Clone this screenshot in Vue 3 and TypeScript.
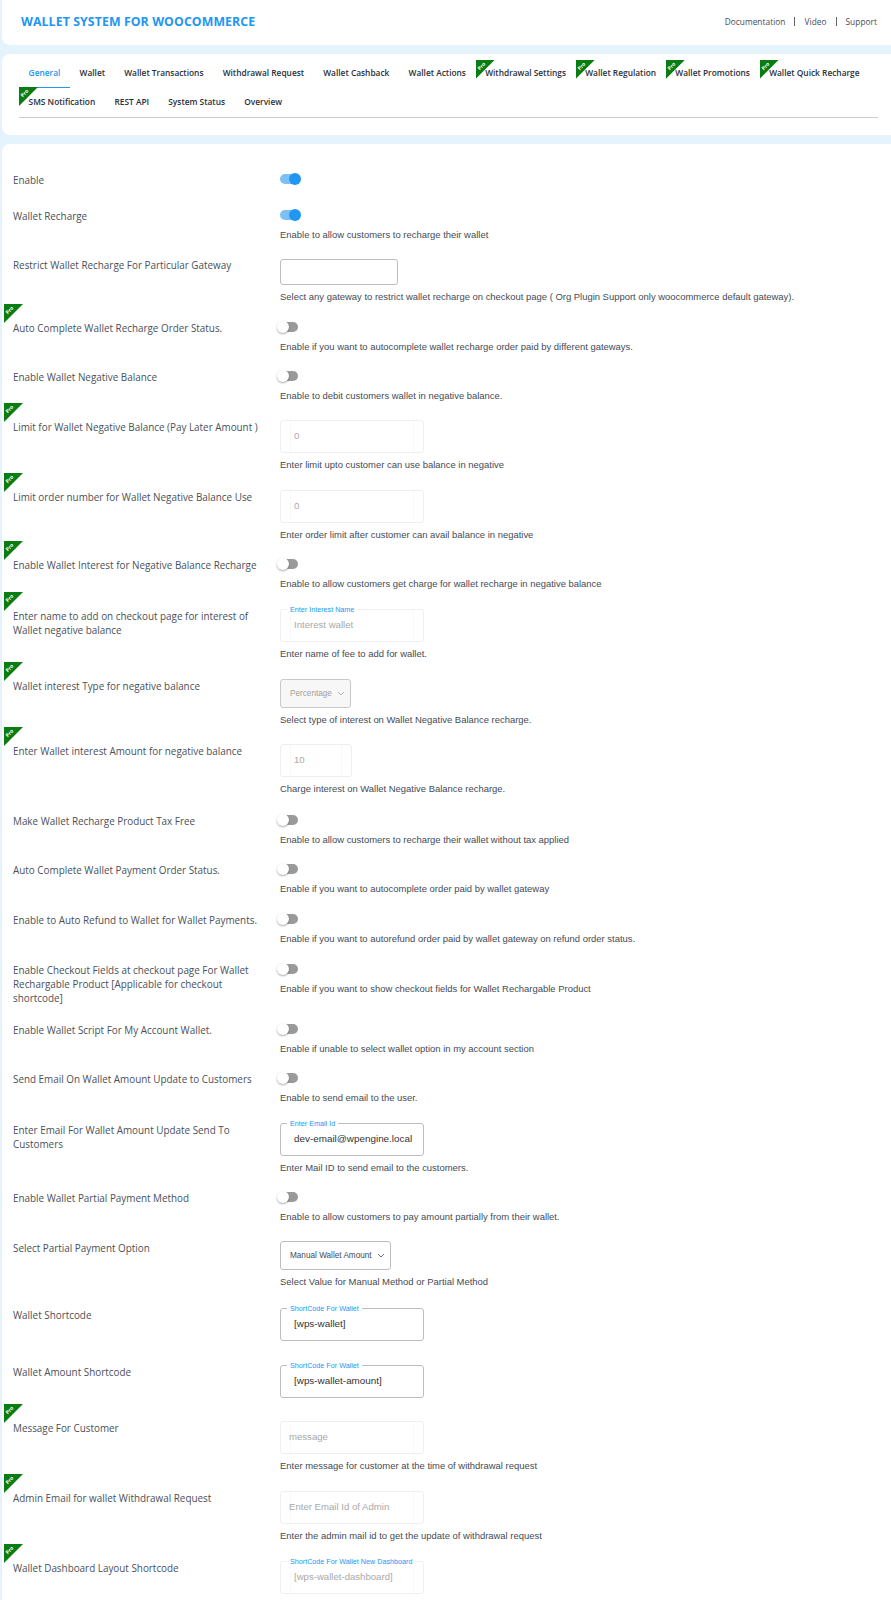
<template>
  <div class="page">
    <header class="card top-bar">
      <h1>WALLET SYSTEM FOR WOOCOMMERCE</h1>
      <nav class="top-links">
        <a>Documentation</a><i></i><a>Video</a><i></i><a>Support</a>
      </nav>
    </header>

    <nav class="card tabs-card">
      <div class="tabs">
        <a
          v-for="tab in tabs"
          :key="tab.name"
          class="tab"
          :class="{ active: tab.name === 'General' }"
        >
          <span v-if="tab.pro" class="pro tab-pro"><b>Pro</b></span>
          {{ tab.name }}
        </a>
      </div>
    </nav>

    <section class="card settings">
      <div
        v-for="row in rows"
        :key="row.label"
        class="row"
        :style="{ height: row.h + 'px' }"
      >
        <div class="label">
          <span v-if="row.pro" class="pro row-pro"><b>Pro</b></span>
          {{ row.label }}
        </div>
        <div class="control">
          <div v-if="row.kind === 'toggle'" class="toggle" :class="{ on: row.on }"></div>

          <div v-else-if="row.kind === 'select'" class="select" :class="{ off: row.off }" :style="{ width: row.w + 'px' }">
            <span>{{ row.value }}</span>
            <svg width="8" height="5" viewBox="0 0 8 5"><path d="M1 1l3 3 3-3" fill="none" stroke="currentColor" stroke-width="0.8" /></svg>
          </div>

          <div
            v-else
            class="field"
            :class="{ off: row.off, flush: row.flush, short: row.kind === 'plain' }"
            :style="{ width: (row.w || 144) + 'px' }"
          >
            <span v-if="row.legend" class="legend">{{ row.legend }}</span>
            <span class="value">{{ row.value }}</span>
          </div>

          <p v-if="row.desc" class="desc" :class="{ 'after-toggle': row.kind === 'toggle' }">{{ row.desc }}</p>
        </div>
      </div>
    </section>
  </div>
</template>

<script setup lang="ts">
type Tab = { name: string; pro?: boolean }

type Row = {
  label: string
  h: number
  kind: 'toggle' | 'input' | 'select' | 'plain'
  desc?: string
  pro?: boolean
  on?: boolean
  off?: boolean
  flush?: boolean
  value?: string
  legend?: string
  w?: number
}

const tabs: Tab[] = [
  { name: 'General' },
  { name: 'Wallet' },
  { name: 'Wallet Transactions' },
  { name: 'Withdrawal Request' },
  { name: 'Wallet Cashback' },
  { name: 'Wallet Actions' },
  { name: 'Withdrawal Settings', pro: true },
  { name: 'Wallet Regulation', pro: true },
  { name: 'Wallet Promotions', pro: true },
  { name: 'Wallet Quick Recharge', pro: true },
  { name: 'SMS Notification', pro: true },
  { name: 'REST API' },
  { name: 'System Status' },
  { name: 'Overview' },
]

const rows: Row[] = [
  { label: 'Enable', h: 36, kind: 'toggle', on: true },
  { label: 'Wallet Recharge', h: 49, kind: 'toggle', on: true, desc: 'Enable to allow customers to recharge their wallet' },
  { label: 'Restrict Wallet Recharge For Particular Gateway', h: 63, kind: 'plain', w: 118, desc: 'Select any gateway to restrict wallet recharge on checkout page ( Org Plugin Support only woocommerce default gateway).' },
  { label: 'Auto Complete Wallet Recharge Order Status.', h: 49, kind: 'toggle', pro: true, desc: 'Enable if you want to autocomplete wallet recharge order paid by different gateways.' },
  { label: 'Enable Wallet Negative Balance', h: 50, kind: 'toggle', desc: 'Enable to debit customers wallet in negative balance.' },
  { label: 'Limit for Wallet Negative Balance (Pay Later Amount )', h: 70, kind: 'input', pro: true, off: true, value: '0', desc: 'Enter limit upto customer can use balance in negative' },
  { label: 'Limit order number for Wallet Negative Balance Use', h: 68, kind: 'input', pro: true, off: true, value: '0', desc: 'Enter order limit after customer can avail balance in negative' },
  { label: 'Enable Wallet Interest for Negative Balance Recharge', h: 51, kind: 'toggle', pro: true, desc: 'Enable to allow customers get charge for wallet recharge in negative balance' },
  { label: 'Enter name to add on checkout page for interest of Wallet negative balance', h: 70, kind: 'input', pro: true, off: true, legend: 'Enter Interest Name', value: 'Interest wallet', desc: 'Enter name of fee to add for wallet.' },
  { label: 'Wallet interest Type for negative balance', h: 65, kind: 'select', pro: true, off: true, w: 71, value: 'Percentage', desc: 'Select type of interest on Wallet Negative Balance recharge.' },
  { label: 'Enter Wallet interest Amount for negative balance', h: 70, kind: 'input', pro: true, off: true, w: 72, value: '10', desc: 'Charge interest on Wallet Negative Balance recharge.' },
  { label: 'Make Wallet Recharge Product Tax Free', h: 49, kind: 'toggle', desc: 'Enable to allow customers to recharge their wallet without tax applied' },
  { label: 'Auto Complete Wallet Payment Order Status.', h: 50, kind: 'toggle', desc: 'Enable if you want to autocomplete order paid by wallet gateway' },
  { label: 'Enable to Auto Refund to Wallet for Wallet Payments.', h: 50, kind: 'toggle', desc: 'Enable if you want to autorefund order paid by wallet gateway on refund order status.' },
  { label: 'Enable Checkout Fields at checkout page For Wallet Rechargable Product [Applicable for checkout shortcode]', h: 60, kind: 'toggle', desc: 'Enable if you want to show checkout fields for Wallet Rechargable Product' },
  { label: 'Enable Wallet Script For My Account Wallet.', h: 49, kind: 'toggle', desc: 'Enable if unable to select wallet option in my account section' },
  { label: 'Send Email On Wallet Amount Update to Customers', h: 51, kind: 'toggle', desc: 'Enable to send email to the user.' },
  { label: 'Enter Email For Wallet Amount Update Send To Customers', h: 68, kind: 'input', legend: 'Enter Email Id', value: 'dev-email@wpengine.local', desc: 'Enter Mail ID to send email to the customers.' },
  { label: 'Enable Wallet Partial Payment Method', h: 50, kind: 'toggle', desc: 'Enable to allow customers to pay amount partially from their wallet.' },
  { label: 'Select Partial Payment Option', h: 67, kind: 'select', w: 111, value: 'Manual Wallet Amount', desc: 'Select Value for Manual Method or Partial Method' },
  { label: 'Wallet Shortcode', h: 57, kind: 'input', legend: 'ShortCode For Wallet', value: '[wps-wallet]' },
  { label: 'Wallet Amount Shortcode', h: 56, kind: 'input', legend: 'ShortCode For Wallet', value: '[wps-wallet-amount]' },
  { label: 'Message For Customer', h: 70, kind: 'input', pro: true, off: true, flush: true, value: 'message', desc: 'Enter message for customer at the time of withdrawal request' },
  { label: 'Admin Email for wallet Withdrawal Request', h: 70, kind: 'input', pro: true, off: true, flush: true, value: 'Enter Email Id of Admin', desc: 'Enter the admin mail id to get the update of withdrawal request' },
  { label: 'Wallet Dashboard Layout Shortcode', h: 70, kind: 'input', pro: true, off: true, legend: 'ShortCode For Wallet New Dashboard', value: '[wps-wallet-dashboard]' },
]
</script>

<style>
html,
body {
  background: #e5f3fd;
}
</style>

<style scoped>
.page {
  height: 1600px;
  overflow: hidden;
  padding-left: 2px;
  box-sizing: border-box;
  font-family: "Open Sans", "Liberation Sans", sans-serif;
}

.card {
  background: #fff;
  border-radius: 0 0 0 8px;
}

.top-bar {
  height: 45px;
  display: flex;
  align-items: center;
  justify-content: space-between;
  padding: 0 14px 3px 19px;
  box-sizing: border-box;
}

.top-bar h1 {
  margin: 0;
  color: #2196f3;
  font-size: 12.3px;
  font-weight: 700;
  letter-spacing: 0.1px;
}

.top-links {
  display: flex;
  align-items: center;
  gap: 9px;
  color: #444b55;
  font-size: 8.3px;
  font-weight: 500;
  letter-spacing: 0.05px;
}

.top-links i {
  width: 1px;
  height: 9px;
  background: #666;
}

.tabs-card {
  margin-top: 9px;
  height: 81px;
  border-radius: 8px 0 0 8px;
  padding: 5px 13px 0 17px;
  box-sizing: border-box;
}

.tabs {
  display: flex;
  flex-wrap: wrap;
  height: 58px;
  border-bottom: 1px solid #ccc;
  align-content: flex-start;
}

.tab {
  position: relative;
  height: 29px;
  line-height: 28px;
  padding: 0 9.6px;
  box-sizing: border-box;
  color: #2b3038;
  font-size: 8.35px;
  font-weight: 600;
  white-space: nowrap;
}

.tab.active {
  color: #2196f3;
  border-bottom: 1px solid #2196f3;
}

.pro {
  position: absolute;
  width: 19px;
  height: 19px;
  background: #0a7d12;
  clip-path: polygon(0 0, 100% 0, 0 100%);
  overflow: hidden;
}

.pro b {
  position: absolute;
  left: 1px;
  top: 3px;
  color: #fff;
  font-size: 5px;
  line-height: 6px;
  font-weight: 700;
  transform: rotate(-45deg);
}

.tab-pro {
  left: 0;
  top: 1px;
}

.tab:nth-child(n + 11) .tab-pro {
  top: -1px;
}

.settings {
  margin-top: 9px;
  padding: 29px 0 0 11px;
  border-radius: 8px 0 0 0;
  height: 1456px;
  box-sizing: border-box;
}

.row {
  display: flex;
  position: relative;
  box-sizing: border-box;
}

.label {
  width: 267px;
  padding-right: 12px;
  box-sizing: border-box;
  color: #4a505a;
  font-size: 9.9px;
  font-weight: 500;
  line-height: 14px;
}

.row-pro {
  left: -9px;
  top: -17px;
}

.control {
  flex: 1;
  font-family: "Liberation Sans", sans-serif;
}

.desc {
  margin: 3px 0 0;
  color: #444b55;
  font-size: 9.45px;
  line-height: 18px;
  white-space: nowrap;
}

.desc.after-toggle {
  margin-top: 6px;
}

.toggle {
  position: relative;
  width: 18px;
  height: 10px;
  margin-top: 1px;
  border-radius: 5px;
  background: #9a9a9a;
}

.toggle::after {
  content: "";
  position: absolute;
  left: -3px;
  top: -1px;
  width: 12px;
  height: 12px;
  border-radius: 50%;
  background: #fff;
  box-shadow: 0 1px 2px rgba(0, 0, 0, 0.35);
}

.toggle.on {
  background: #7cc0f7;
}

.toggle.on::after {
  left: 9px;
  background: #2196f3;
  box-shadow: none;
}

.field {
  position: relative;
  height: 33px;
  border: 1px solid #bdbdbd;
  border-radius: 3px;
  box-sizing: border-box;
  padding-left: 13px;
  color: #333;
  font-size: 9.9px;
  line-height: 30px;
  white-space: nowrap;
}

.field.short {
  height: 26px;
  margin-top: 1px;
}

.field.off {
  border-color: #efefef;
  color: #a9a9a9;
  font-size: 9.6px;
}

.field.off::before {
  content: "";
  position: absolute;
  left: 9px;
  right: 9px;
  top: 0;
  bottom: 0;
  border-left: 1px solid #f8f8f8;
  border-right: 1px solid #f8f8f8;
}

.value {
  position: relative;
}

.field.flush {
  padding-left: 8px;
}

.legend {
  position: absolute;
  left: 6px;
  top: -5px;
  padding: 0 3px;
  background: #fff;
  color: #2196f3;
  font-size: 7.2px;
  line-height: 9px;
  white-space: nowrap;
}

.select {
  display: flex;
  align-items: center;
  justify-content: space-between;
  height: 29px;
  padding: 0 5px 0 9px;
  border: 1px solid #bdbdbd;
  border-radius: 3px;
  box-sizing: border-box;
  color: #444b55;
  font-size: 8.2px;
}

.select.off {
  background: #f7f7f7;
  color: #a0a0a0;
  border-color: #c8c8c8;
}
</style>
